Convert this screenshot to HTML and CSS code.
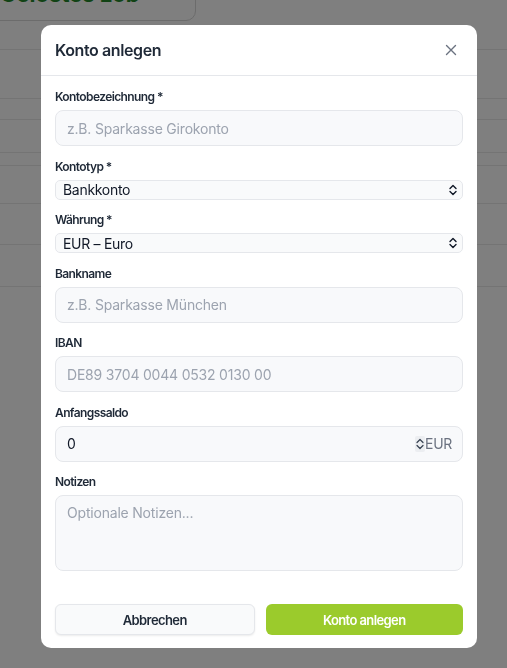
FILE: index.html
```html
<!DOCTYPE html>
<html lang="de">
<head>
    <meta charset="UTF-8">
    <meta name="viewport" content="width=device-width, initial-scale=1.0">
    <title>Konto anlegen</title>
    <link rel="stylesheet" href="styles.css">
</head>
<body>
    <div class="page">
        <div class="summary-card">
            <span class="summary-value">Gelöstes Lob</span>
        </div>
        <div class="rows">
            <div class="row r1"></div>
            <div class="row r2"></div>
            <div class="row r3"></div>
            <div class="row r4"></div>
            <div class="row r5"></div>
            <div class="row r6"></div>
            <div class="row r7"></div>
            <div class="row r8"></div>
        </div>
    </div>

    <div class="overlay">
        <div class="modal">
            <div class="modal-header">
                <h2>Konto anlegen</h2>
                <button class="close-button" aria-label="Schließen">
                    <svg width="12" height="12" viewBox="0 0 12 12" fill="none" stroke="#6b7280" stroke-width="1.4" stroke-linecap="round">
                        <path d="M1.5 1.5l9 9M10.5 1.5l-9 9"/>
                    </svg>
                </button>
            </div>

            <form id="accountForm">
                <div class="modal-body">
                    <div class="form-group">
                        <label for="name">Kontobezeichnung *</label>
                        <input type="text" id="name" class="field" placeholder="z.B. Sparkasse Girokonto">
                    </div>

                    <div class="form-group">
                        <label for="type">Kontotyp *</label>
                        <div class="select-wrap">
                            <select id="type">
                                <option>Bankkonto</option>
                                <option>Bargeld</option>
                                <option>Kreditkarte</option>
                            </select>
                            <svg class="select-icon" width="8" height="12" viewBox="0 0 8 12" fill="none" stroke="#111827" stroke-width="1.4" stroke-linecap="round" stroke-linejoin="round">
                                <path d="M1 4.5L4 1.5l3 3M1 7.5l3 3 3-3"/>
                            </svg>
                        </div>
                    </div>

                    <div class="form-group">
                        <label for="currency">Währung *</label>
                        <div class="select-wrap">
                            <select id="currency">
                                <option>EUR – Euro</option>
                                <option>USD – US-Dollar</option>
                                <option>CHF – Schweizer Franken</option>
                            </select>
                            <svg class="select-icon" width="8" height="12" viewBox="0 0 8 12" fill="none" stroke="#111827" stroke-width="1.4" stroke-linecap="round" stroke-linejoin="round">
                                <path d="M1 4.5L4 1.5l3 3M1 7.5l3 3 3-3"/>
                            </svg>
                        </div>
                    </div>

                    <div class="form-group">
                        <label for="bank">Bankname</label>
                        <input type="text" id="bank" class="field" placeholder="z.B. Sparkasse München">
                    </div>

                    <div class="form-group">
                        <label for="iban">IBAN</label>
                        <input type="text" id="iban" class="field" placeholder="DE89 3704 0044 0532 0130 00">
                    </div>

                    <div class="form-group">
                        <label for="balance">Anfangssaldo</label>
                        <div class="amount-field">
                            <input type="text" id="balance" value="0">
                            <span class="spinner">
                                <svg width="8" height="12" viewBox="0 0 8 12" fill="none" stroke="#374151" stroke-width="1.2" stroke-linecap="round" stroke-linejoin="round">
                                    <path d="M1 4.5L4 1.5l3 3M1 7.5l3 3 3-3"/>
                                </svg>
                            </span>
                            <span class="unit">EUR</span>
                        </div>
                    </div>

                    <div class="form-group">
                        <label for="notes">Notizen</label>
                        <textarea id="notes" class="field notes" placeholder="Optionale Notizen..."></textarea>
                    </div>
                </div>

                <div class="modal-footer">
                    <button type="button" class="btn btn-secondary">Abbrechen</button>
                    <button type="submit" class="btn btn-primary">Konto anlegen</button>
                </div>
            </form>
        </div>
    </div>
</body>
</html>
```

FILE: styles.css
```css
body {
    margin: 0;
    font-family: Inter, "Noto Sans", sans-serif;
    background-color: #ffffff;
    color: #1f2937;
}

/* page behind the dialog */
.page {
    height: 668px;
    overflow: hidden;
}

.summary-card {
    width: 206px;
    height: 40px;
    margin-top: -19px;
    margin-left: -10px;
    border: 1px solid #d8d8d8;
    border-radius: 10px;
    box-sizing: border-box;
    overflow: hidden;
}

.summary-value {
    display: block;
    margin-top: -1px;
    padding-left: 9px;
    font-size: 22px;
    line-height: 26px;
    font-weight: 700;
    color: #23862a;
}

.row {
    border-bottom: 1px solid #e8e8e8;
    box-sizing: border-box;
}

.r1 { height: 29px; }
.r2 { height: 49px; }
.r3 { height: 21px; }
.r4 { height: 33px; }
.r5 { height: 13px; }
.r6 { height: 38px; }
.r7 { height: 41px; }
.r8 { height: 42px; }

/* dialog */
.overlay {
    position: fixed;
    inset: 0;
    background-color: rgba(0, 0, 0, 0.5);
    display: flex;
    align-items: flex-start;
    padding: 25px 30px 0 41px;
}

.modal {
    width: 436px;
    background-color: #ffffff;
    border-radius: 10px;
    overflow: hidden;
}

.modal-header {
    height: 51px;
    padding: 0 14px;
    display: flex;
    justify-content: space-between;
    align-items: center;
    border-bottom: 1px solid #e5e7eb;
    box-sizing: border-box;
}

.modal-header h2 {
    margin: 0;
    font-size: 16px;
    font-weight: 600;
    letter-spacing: -0.4px;
    color: #1f2937;
}

.close-button {
    width: 24px;
    height: 24px;
    border: none;
    background: none;
    padding: 0;
    display: flex;
    align-items: center;
    justify-content: center;
    cursor: pointer;
}

.modal-body {
    padding: 13px 14px 0;
    display: flex;
    flex-direction: column;
    gap: 12.5px;
}

.form-group label {
    display: block;
    font-size: 12px;
    line-height: 16px;
    font-weight: 600;
    letter-spacing: -0.6px;
    color: #1f2937;
    margin-bottom: 5px;
}

.field {
    display: block;
    width: 100%;
    height: 36px;
    padding: 0 11px;
    border: 1px solid #e5e7eb;
    border-radius: 8px;
    background-color: #f8f9fb;
    font-family: inherit;
    font-size: 14px;
    letter-spacing: -0.2px;
    color: #111827;
    box-sizing: border-box;
    outline: none;
}

.field::placeholder {
    color: #9ca3af;
}

.notes {
    height: 76px;
    padding-top: 8px;
    resize: none;
    margin-top: 1px;
}

.select-wrap {
    position: relative;
}

.select-wrap select {
    display: block;
    width: 100%;
    height: 20px;
    padding: 0 7px;
    appearance: none;
    border: 1px solid #e5e7eb;
    border-radius: 5px;
    background-color: #f9fafb;
    font-family: inherit;
    font-size: 14px;
    letter-spacing: -0.3px;
    color: #111827;
    box-sizing: border-box;
    outline: none;
}

.select-icon {
    position: absolute;
    right: 6px;
    top: 4px;
    pointer-events: none;
}

.amount-field {
    display: flex;
    align-items: center;
    height: 36px;
    padding: 0 10px 0 11px;
    border: 1px solid #e5e7eb;
    border-radius: 8px;
    background-color: #f8f9fb;
    box-sizing: border-box;
}

.amount-field input {
    flex: 1;
    min-width: 0;
    border: none;
    background: none;
    padding: 0;
    font-family: inherit;
    font-size: 14px;
    color: #111827;
    outline: none;
}

.spinner {
    width: 10px;
    height: 16px;
    display: flex;
    align-items: center;
    justify-content: center;
    background-color: #eceef1;
    border-radius: 2px;
}

.unit {
    font-size: 14px;
    letter-spacing: -0.3px;
    color: #6b7280;
}

.modal-footer {
    display: flex;
    gap: 11px;
    padding: 33px 14px 13px;
}

.btn {
    flex: 1;
    height: 31px;
    border-radius: 6px;
    font-family: inherit;
    font-size: 13px;
    font-weight: 600;
    letter-spacing: -0.6px;
    cursor: pointer;
}

.btn-secondary {
    background-color: #f9fafb;
    border: 1px solid #e5e7eb;
    color: #1f2937;
    box-shadow: 0 1px 2px rgba(0, 0, 0, 0.08);
}

.btn-primary {
    background-color: #9bcb2c;
    border: none;
    color: #ffffff;
}
```
